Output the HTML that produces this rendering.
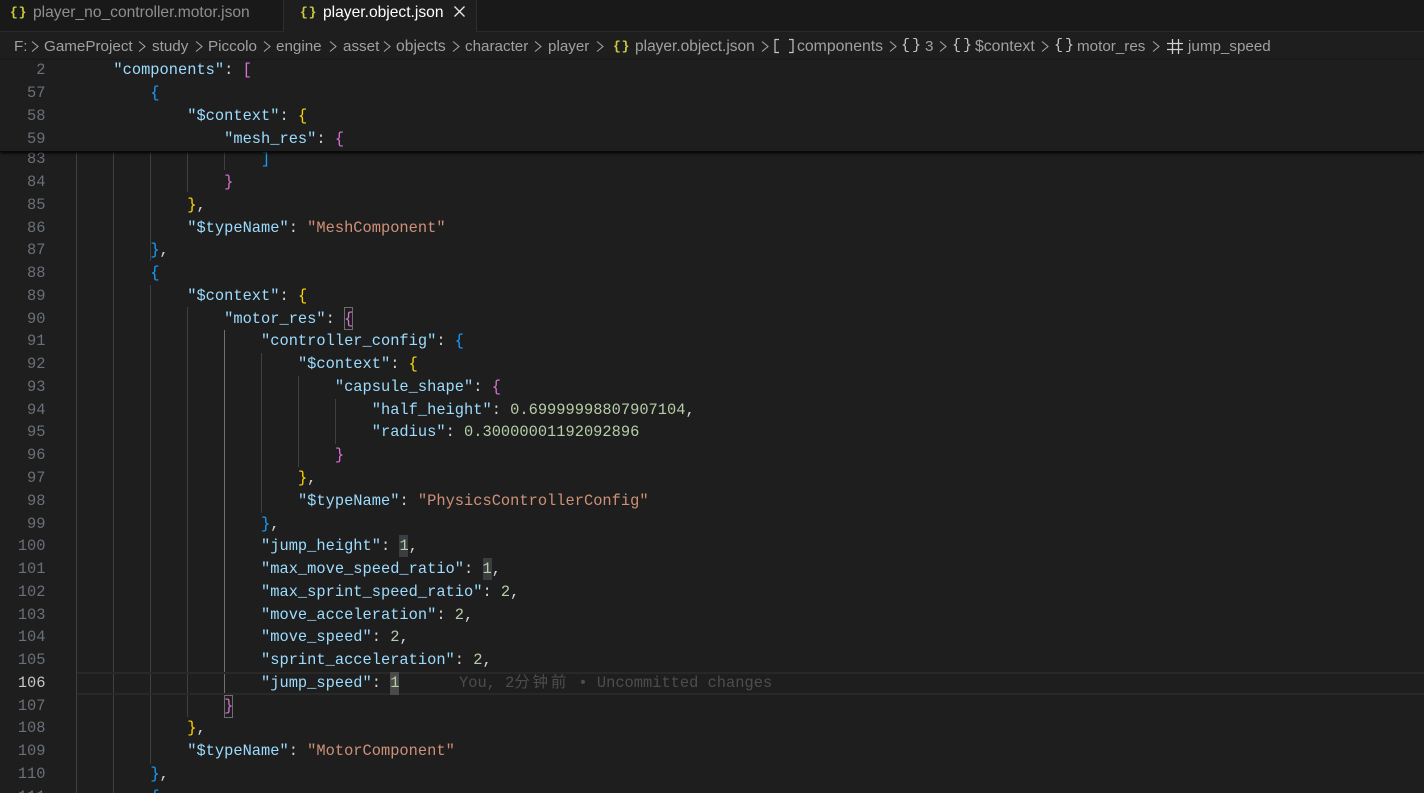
<!DOCTYPE html>
<html><head><meta charset="utf-8"><style>
html,body{margin:0;padding:0;background:#1e1e1e;width:1424px;height:793px;overflow:hidden}
#r{position:relative;width:1424px;height:793px;overflow:hidden;background:#1e1e1e}
.a{position:absolute}
.ln,.c{position:absolute;font:15.38px/23px "Liberation Mono","Noto Sans CJK SC",monospace;white-space:pre;height:23px;margin-top:.8px}
.ln{left:0;width:45.5px;text-align:right;color:#6a7079}
.c{left:76.5px;color:#d4d4d4}
.k{color:#9cdcfe}.s{color:#ce9178}.n{color:#b5cea8}.g{color:#ffd700}.o{color:#da70d6}.b{color:#179fff}
.gd{position:absolute;width:1px;background:#404040}
.t{position:absolute;font:15.6px/20px "Liberation Sans",sans-serif;white-space:pre}
.cr{position:absolute;font:15.2px/20px "Liberation Sans",sans-serif;color:#a0a0a0;white-space:pre;top:37px}
.ch{position:absolute;top:41px}
.ic{position:absolute;font:bold 13px/16px "Liberation Mono",monospace;color:#cbcb41;white-space:pre;letter-spacing:-.5px;word-spacing:-6px}
.iw{color:#c5c5c5;font-weight:normal;font-size:15px;letter-spacing:0;word-spacing:-7px}
</style></head><body><div id="r">

<svg width="0" height="0" style="position:absolute"><defs><path id="cv" d="M1 .5L7 5.5L1 10.5" stroke="#a0a0a0" stroke-width="1.1" fill="none"/></defs></svg>

<div class="a" style="left:0;top:0;width:1424px;height:32px;background:#191919;border-bottom:1px solid #2a2a2a;box-sizing:border-box"></div>
<div class="a" style="left:283px;top:0;width:1px;height:32px;background:#2e2e2e"></div>
<div class="a" style="left:476px;top:0;width:1px;height:32px;background:#2e2e2e"></div>
<div class="a" style="left:284px;top:0;width:192px;height:33px;background:#1e1e1e"></div>
<div class="ic" style="left:10px;top:5px">{ }</div>
<div class="t" style="left:33px;top:3px;color:#8f8f8f">player_no_controller.motor.json</div>
<div class="ic" style="left:300px;top:5px">{ }</div>
<div class="t" style="left:323px;top:3px;color:#fff">player.object.json</div>
<svg class="a" style="left:453px;top:5px" width="13" height="13"><path d="M1.5 1.5L11.5 11.5M11.5 1.5L1.5 11.5" stroke="#e8e8e8" stroke-width="1.3" fill="none"/></svg>

<div class="cr" style="left:14px">F:</div><svg class="ch" style="left:31px" width="8" height="11"><use href="#cv"/></svg>
<div class="cr" style="left:44px">GameProject</div><svg class="ch" style="left:138px" width="8" height="11"><use href="#cv"/></svg>
<div class="cr" style="left:152px">study</div><svg class="ch" style="left:195px" width="8" height="11"><use href="#cv"/></svg>
<div class="cr" style="left:208px">Piccolo</div><svg class="ch" style="left:263px" width="8" height="11"><use href="#cv"/></svg>
<div class="cr" style="left:276px">engine</div><svg class="ch" style="left:329px" width="8" height="11"><use href="#cv"/></svg>
<div class="cr" style="left:343px">asset</div><svg class="ch" style="left:383px" width="8" height="11"><use href="#cv"/></svg>
<div class="cr" style="left:396px;font-size:15.7px">objects</div><svg class="ch" style="left:452px" width="8" height="11"><use href="#cv"/></svg>
<div class="cr" style="left:465px">character</div><svg class="ch" style="left:534px" width="8" height="11"><use href="#cv"/></svg>
<div class="cr" style="left:548px">player</div><svg class="ch" style="left:596px" width="8" height="11"><use href="#cv"/></svg>
<div class="ic" style="left:613px;top:39px">{ }</div>
<div class="cr" style="left:635px;font-size:15.5px">player.object.json</div><svg class="ch" style="left:761px" width="8" height="11"><use href="#cv"/></svg>
<svg class="a" style="left:773px;top:38px" width="22" height="16"><path d="M6 1.5H2V14.5H6M16 1.5H20V14.5H16" stroke="#c5c5c5" stroke-width="1.2" fill="none"/></svg>
<div class="cr" style="left:797px;font-size:15.8px">components</div><svg class="ch" style="left:889px" width="8" height="11"><use href="#cv"/></svg>
<div class="ic iw" style="left:901px;top:38px">{ }</div>
<div class="cr" style="left:925px">3</div><svg class="ch" style="left:939px" width="8" height="11"><use href="#cv"/></svg>
<div class="ic iw" style="left:952px;top:38px">{ }</div>
<div class="cr" style="left:975px;font-size:15.8px">$context</div><svg class="ch" style="left:1041px" width="8" height="11"><use href="#cv"/></svg>
<div class="ic iw" style="left:1054px;top:38px">{ }</div>
<div class="cr" style="left:1077px">motor_res</div><svg class="ch" style="left:1152px" width="8" height="11"><use href="#cv"/></svg>
<svg class="a" style="left:1166px;top:38px" width="18" height="17"><path d="M6.5 1V16M12.5 1V16M1 5.5H17M1 11.5H17" stroke="#d0d0d0" stroke-width="1.3" fill="none"/></svg>
<div class="cr" style="left:1188px">jump_speed</div>

<div class="gd" style="left:76px;top:152px;height:641px"></div>
<div class="gd" style="left:113px;top:152px;height:641px"></div>
<div class="gd" style="left:150px;top:152px;height:109px"></div>
<div class="gd" style="left:150px;top:285px;height:479px"></div>
<div class="gd" style="left:187px;top:152px;height:40px"></div>
<div class="gd" style="left:187px;top:307px;height:410px"></div>
<div class="gd" style="left:224px;top:152px;height:18px"></div>
<div class="gd" style="left:224px;top:330px;height:365px;background:#707070"></div>
<div class="gd" style="left:261px;top:353px;height:160px"></div>
<div class="gd" style="left:298px;top:376px;height:91px"></div>
<div class="gd" style="left:335px;top:399px;height:45px"></div>

<div class="a" style="left:77px;top:672px;width:1347px;height:19px;border-top:2px solid #282828;border-bottom:2px solid #282828"></div>
<div class="a" style="left:344px;top:307px;width:7px;height:21px;border:1px solid #6e6e6e"></div>
<div class="a" style="left:224px;top:695px;width:7px;height:21px;border:1px solid #6e6e6e"></div>
<div class="a" style="left:399px;top:535px;width:9px;height:22px;background:#3a3d41"></div>
<div class="a" style="left:483px;top:558px;width:9px;height:22px;background:#3a3d41"></div>
<div class="a" style="left:390px;top:672px;width:9px;height:23px;background:#4a4a4a"></div>

<div class="ln" style="top:147.5px">83</div><div class="c" style="top:147.5px">                    <span class="b">]</span></div>
<div class="ln" style="top:170.3px">84</div><div class="c" style="top:170.3px">                <span class="o">}</span></div>
<div class="ln" style="top:193.1px">85</div><div class="c" style="top:193.1px">            <span class="g">}</span>,</div>
<div class="ln" style="top:215.8px">86</div><div class="c" style="top:215.8px">            <span class="k">"$typeName"</span>: <span class="s">"MeshComponent"</span></div>
<div class="ln" style="top:238.6px">87</div><div class="c" style="top:238.6px">        <span class="b">}</span>,</div>
<div class="ln" style="top:261.4px">88</div><div class="c" style="top:261.4px">        <span class="b">{</span></div>
<div class="ln" style="top:284.1px">89</div><div class="c" style="top:284.1px">            <span class="k">"$context"</span>: <span class="g">{</span></div>
<div class="ln" style="top:306.9px">90</div><div class="c" style="top:306.9px">                <span class="k">"motor_res"</span>: <span class="o">{</span></div>
<div class="ln" style="top:329.7px">91</div><div class="c" style="top:329.7px">                    <span class="k">"controller_config"</span>: <span class="b">{</span></div>
<div class="ln" style="top:352.4px">92</div><div class="c" style="top:352.4px">                        <span class="k">"$context"</span>: <span class="g">{</span></div>
<div class="ln" style="top:375.2px">93</div><div class="c" style="top:375.2px">                            <span class="k">"capsule_shape"</span>: <span class="o">{</span></div>
<div class="ln" style="top:398px">94</div><div class="c" style="top:398px">                                <span class="k">"half_height"</span>: <span class="n">0.69999998807907104</span>,</div>
<div class="ln" style="top:420.7px">95</div><div class="c" style="top:420.7px">                                <span class="k">"radius"</span>: <span class="n">0.30000001192092896</span></div>
<div class="ln" style="top:443.5px">96</div><div class="c" style="top:443.5px">                            <span class="o">}</span></div>
<div class="ln" style="top:466.3px">97</div><div class="c" style="top:466.3px">                        <span class="g">}</span>,</div>
<div class="ln" style="top:489px">98</div><div class="c" style="top:489px">                        <span class="k">"$typeName"</span>: <span class="s">"PhysicsControllerConfig"</span></div>
<div class="ln" style="top:511.8px">99</div><div class="c" style="top:511.8px">                    <span class="b">}</span>,</div>
<div class="ln" style="top:534.6px">100</div><div class="c" style="top:534.6px">                    <span class="k">"jump_height"</span>: <span class="n">1</span>,</div>
<div class="ln" style="top:557.3px">101</div><div class="c" style="top:557.3px">                    <span class="k">"max_move_speed_ratio"</span>: <span class="n">1</span>,</div>
<div class="ln" style="top:580.1px">102</div><div class="c" style="top:580.1px">                    <span class="k">"max_sprint_speed_ratio"</span>: <span class="n">2</span>,</div>
<div class="ln" style="top:602.9px">103</div><div class="c" style="top:602.9px">                    <span class="k">"move_acceleration"</span>: <span class="n">2</span>,</div>
<div class="ln" style="top:625.6px">104</div><div class="c" style="top:625.6px">                    <span class="k">"move_speed"</span>: <span class="n">2</span>,</div>
<div class="ln" style="top:648.4px">105</div><div class="c" style="top:648.4px">                    <span class="k">"sprint_acceleration"</span>: <span class="n">2</span>,</div>
<div class="ln" style="top:671.2px;color:#c6c6c6">106</div><div class="c" style="top:671.2px">                    <span class="k">"jump_speed"</span>: <span class="n">1</span></div>
<div class="c" style="top:671.2px;left:459px;color:#4d4d4d">You, 2<span style="letter-spacing:2.9px">分钟前</span> • Uncommitted changes</div>
<div class="ln" style="top:693.9px">107</div><div class="c" style="top:693.9px">                <span class="o">}</span></div>
<div class="ln" style="top:716.7px">108</div><div class="c" style="top:716.7px">            <span class="g">}</span>,</div>
<div class="ln" style="top:739.5px">109</div><div class="c" style="top:739.5px">            <span class="k">"$typeName"</span>: <span class="s">"MotorComponent"</span></div>
<div class="ln" style="top:762.2px">110</div><div class="c" style="top:762.2px">        <span class="b">}</span>,</div>
<div class="ln" style="top:785px">111</div><div class="c" style="top:785px">        <span class="b">{</span></div>

<div class="a" style="left:0;top:60px;width:1424px;height:91px;background:#1e1e1e;box-shadow:0 1px 3px #000;border-bottom:1px solid #0a0a0a"></div>
<div class="ln" style="top:58px">2</div><div class="c" style="top:58px">    <span class="k">"components"</span>: <span class="o">[</span></div>
<div class="ln" style="top:81px">57</div><div class="c" style="top:81px">        <span class="b">{</span></div>
<div class="ln" style="top:104px">58</div><div class="c" style="top:104px">            <span class="k">"$context"</span>: <span class="g">{</span></div>
<div class="ln" style="top:127px">59</div><div class="c" style="top:127px">                <span class="k">"mesh_res"</span>: <span class="o">{</span></div>

</div></body></html>
